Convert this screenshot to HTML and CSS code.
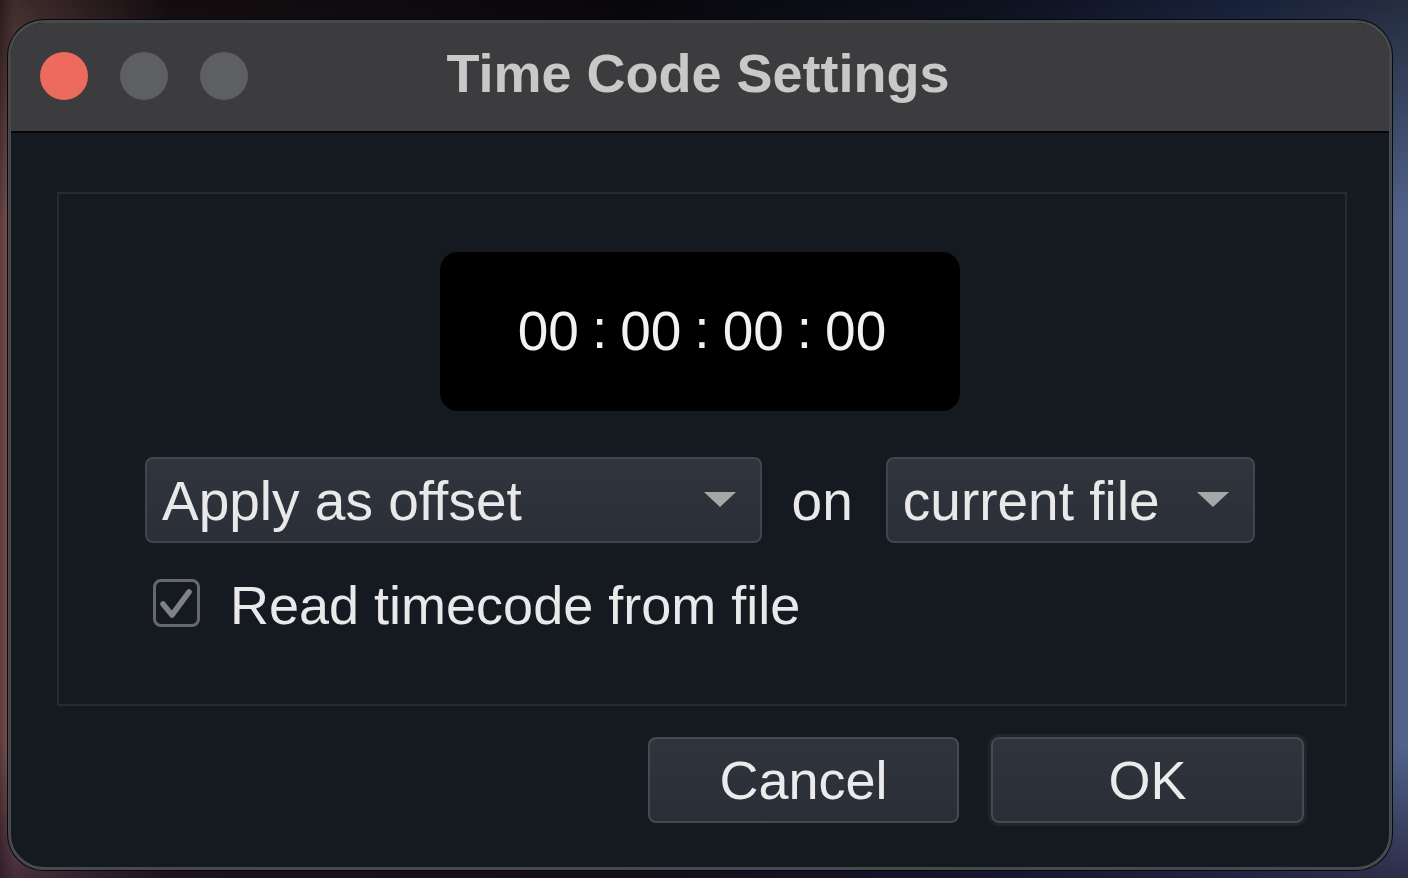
FILE: index.html
```html
<!DOCTYPE html>
<html lang="en">
<head>
<meta charset="utf-8">
<title>Time Code Settings</title>
<link rel="stylesheet" href="styles.css">
</head>
<body>
<div class="desktop">
  <div class="window">
    <div class="titlebar">
      <div class="lights">
        <span class="light light-close"></span>
        <span class="light light-off"></span>
        <span class="light light-off"></span>
      </div>
      <div class="title">Time Code Settings</div>
      <div class="spacer"></div>
    </div>
    <div class="content">
      <div class="group">
        <div class="timecode">
          <span>00</span><span class="sep">:</span><span>00</span><span class="sep">:</span><span>00</span><span class="sep">:</span><span>00</span>
        </div>
        <div class="controls">
          <div class="combo-row">
            <div class="combo combo-wide">
              <span class="combo-text">Apply as offset</span>
              <span class="arrow"></span>
            </div>
            <span class="on">on</span>
            <div class="combo combo-narrow">
              <span class="combo-text">current file</span>
              <span class="arrow"></span>
            </div>
          </div>
          <label class="check-row">
            <span class="checkbox">
              <svg viewBox="0 0 41 41" width="41" height="41"><polyline points="7,21 16,32 33,9" fill="none" stroke="#808184" stroke-width="5.5" stroke-linecap="round" stroke-linejoin="round"/></svg>
            </span>
            <span class="check-label">Read timecode from file</span>
          </label>
        </div>
      </div>
      <div class="buttons">
        <div class="btn">Cancel</div>
        <div class="btn btn-default">OK</div>
      </div>
    </div>
  </div>
</div>
</body>
</html>
```

FILE: styles.css
```css
* { box-sizing: border-box; }

html, body {
  margin: 0;
  padding: 0;
  width: 1408px;
  height: 878px;
  overflow: hidden;
}

body {
  font-family: "Liberation Sans", Arial, sans-serif;
  background:
    linear-gradient(180deg, rgba(0,0,0,0.55) 0%, rgba(0,0,0,0) 25%, rgba(0,0,0,0) 85%, rgba(20,10,30,0.6) 100%),
    linear-gradient(90deg, #5a3a38 0%, #8a6060 1%, #2a1c22 12%, #120f18 45%, #1c2440 70%, #33477a 88%, #51638a 100%);
}

.desktop {
  padding: 20px 0 0 8px;
}

.window {
  width: 1384px;
  height: 850px;
  border: 3px solid #46494e;
  border-radius: 36px;
  box-shadow: 0 0 0 1px #080808;
  background: #151a21;
  overflow: hidden;
  display: flex;
  flex-direction: column;
}

.titlebar {
  height: 110px;
  flex: none;
  background: #3c3c3e;
  border-bottom: 2px solid #050608;
  display: grid;
  grid-template-columns: 1fr auto 1fr;
  align-items: center;
}

.lights {
  display: flex;
  gap: 32px;
  padding-left: 29px;
  padding-bottom: 3px;
}

.light {
  width: 48px;
  height: 48px;
  border-radius: 50%;
  display: block;
}

.light-close { background: #ed6a5e; }
.light-off { background: #5e5f61; }

.title {
  font-weight: 700;
  font-size: 54px;
  color: #c8c8c8;
  line-height: 1;
  padding-bottom: 9px;
  margin-left: -4px;
  letter-spacing: 0;
}

.content {
  flex: 1;
  padding: 59px 42px 0 46px;
  display: flex;
  flex-direction: column;
}

.group {
  height: 514px;
  border: 2px solid #262b33;
  padding-top: 58px;
  display: flex;
  flex-direction: column;
  align-items: center;
}

.timecode {
  width: 520px;
  height: 159px;
  background: #000;
  border-radius: 18px;
  display: flex;
  align-items: center;
  justify-content: center;
  gap: 13px;
  color: #f2f2f2;
  font-size: 55px;
  line-height: 1;
  margin-left: -4px;
  padding-left: 4px;
}

.timecode .sep {
  position: relative;
  top: -2px;
}

.controls {
  width: 1110px;
  margin-top: 46px;
  margin-left: -4px;
  display: flex;
  flex-direction: column;
}

.combo-row {
  display: flex;
  align-items: center;
  height: 86px;
}

.combo {
  height: 86px;
  background: linear-gradient(180deg, #30353d 0%, #2b3038 100%);
  border: 2px solid #41464e;
  border-radius: 8px;
  display: flex;
  align-items: center;
  justify-content: space-between;
  padding: 0 24px 0 15px;
  color: #e9e9e9;
  font-size: 55px;
  line-height: 1;
}

.combo-wide { width: 618px; }
.combo-narrow { width: 370px; }

.combo-text {
  position: relative;
  top: 1px;
}

.arrow {
  width: 0;
  height: 0;
  border-left: 16px solid transparent;
  border-right: 16px solid transparent;
  border-top: 15px solid #a6a7a9;
  margin-top: -2px;
}

.on {
  color: #e9e9e9;
  font-size: 55px;
  line-height: 1;
  margin: 0 33px 0 30px;
  position: relative;
  top: 1px;
}

.check-row {
  display: flex;
  align-items: center;
  margin-top: 36px;
  padding-left: 8px;
  height: 48px;
}

.checkbox {
  width: 47px;
  height: 48px;
  border: 3px solid #66686c;
  border-radius: 8px;
  background: #151a21;
  display: flex;
  align-items: center;
  justify-content: center;
}

.check-label {
  margin-left: 30px;
  color: #e9e9e9;
  font-size: 54px;
  line-height: 1;
  position: relative;
  top: 2px;
}

.buttons {
  display: flex;
  justify-content: flex-end;
  gap: 32px;
  margin-top: 31px;
  padding-right: 43px;
}

.btn {
  width: 311px;
  height: 86px;
  background: linear-gradient(180deg, #30353d 0%, #2a2f37 100%);
  border: 2px solid #464a51;
  border-radius: 8px;
  color: #ebebeb;
  font-size: 54px;
  line-height: 1;
  display: flex;
  align-items: center;
  justify-content: center;
}

.btn-default {
  width: 313px;
  box-shadow: 0 0 0 3px #1f242b;
}
```
